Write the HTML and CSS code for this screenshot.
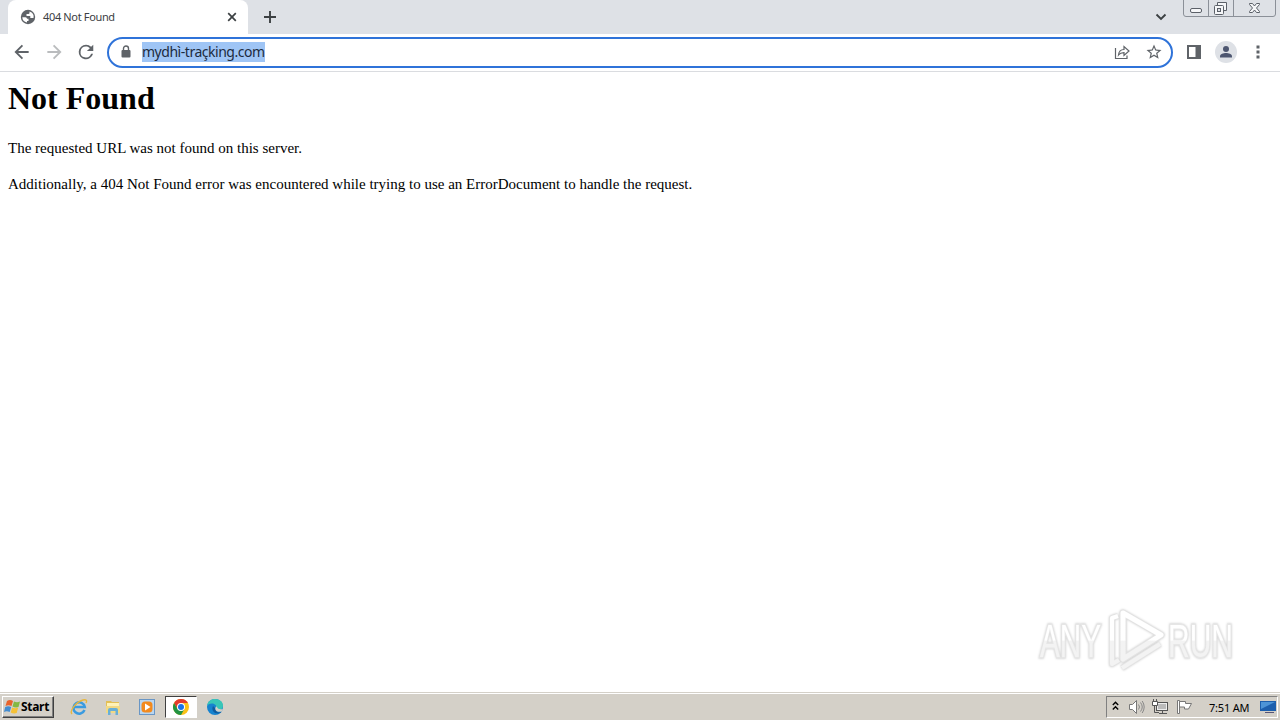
FILE: index.html
```html
<!DOCTYPE html>
<html lang="en">
<head>
  <meta charset="UTF-8">
  <title>404 Not Found</title>
  <link rel="stylesheet" href="styles.css">
</head>
<body>
  <div class="tabstrip">
    <div class="tab">
      <svg class="globe" width="16" height="16" viewBox="0 0 16 16">
        <circle cx="8" cy="8" r="7.200" fill="#5f6368"/>
        <path d="M2.300 8.300h3.200q1.500 0 1.500 1.500h1.500V12H7v1.500Q2.500 12.500 2.300 8.300zM9.500 2.500V4q0 1-1.200 1H6.500v2h3.800v2h3.200Q14.500 4 9.500 2.500z" fill="#fff"/>
      </svg>
      <span class="tab-title">404 Not Found</span>
      <svg class="tab-close" width="10" height="10" viewBox="0 0 10 10"><path d="M1.200 1.200l7.600 7.600M8.800 1.200L1.200 8.800" stroke="#3c4043" stroke-width="1.700"/></svg>
    </div>
    <svg class="new-tab" width="12" height="12" viewBox="0 0 12 12"><path d="M6 0v12M0 6h12" stroke="#3c4043" stroke-width="1.900"/></svg>
    <svg class="tab-search" width="12" height="8" viewBox="0 0 12 8"><path d="M1.500 1.500L6 6l4.500-4.500" fill="none" stroke="#3c4043" stroke-width="1.900"/></svg>
    <svg class="window-buttons" width="94" height="18" viewBox="0 0 94 18">
      <path d="M.5 0v14q0 2.500 2.500 2.500h87q2.500 0 2.500-2.500V0M25.500 0v16.500M50.500 0v16.500" fill="none" stroke="#8b9098"/>
      <rect x="7.500" y="8.500" width="11" height="4" rx="1.500" fill="#f5f6f8" stroke="#5b6068"/>
      <path d="M34.500 5.500v-3h9v8h-3" fill="#f5f6f8" stroke="#5b6068"/>
      <rect x="31.500" y="5.500" width="9" height="9" rx="1" fill="#f5f6f8" stroke="#5b6068"/>
      <rect x="34.500" y="8.500" width="3" height="3" fill="#dee1e6" stroke="#5b6068"/>
      <path d="M66.500 3.500h3l2 2.500 2-2.500h3v1L73.500 8l3 3.500v1h-3l-2-2.500-2 2.500h-3v-1l3-3.500-3-3.500z" fill="#f5f6f8" stroke="#5b6068"/>
    </svg>
  </div>

  <div class="toolbar">
    <svg class="nav" viewBox="0 0 24 24"><path d="M20 12H5M12.500 4l-8 8 8 8" fill="none" stroke="#5f6368" stroke-width="2.200"/></svg>
    <svg class="nav" viewBox="0 0 24 24"><path d="M4 12h15M11.500 4l8 8-8 8" fill="none" stroke="#babcbe" stroke-width="2.200"/></svg>
    <svg class="nav" viewBox="1 1 22 22"><path d="M17.650 6.350A7.950 7.950 0 0 0 12 4a8 8 0 1 0 7.730 10h-2.080A6 6 0 1 1 12 6c1.660 0 3.140.69 4.220 1.780L13 11h7V4z" fill="#5f6368"/></svg>
    <div class="omnibox">
      <svg class="lock" width="10" height="14" viewBox="0 0 10 14"><path d="M2.500 6V3.500a2.500 2.500 0 0 1 5 0V6" fill="none" stroke="#5f6368" stroke-width="1.400"/><rect x=".5" y="5" width="9" height="7.500" rx="1" fill="#5f6368"/></svg>
      <span class="url">mydhì-traçking.com</span>
      <svg class="share" width="16" height="16" viewBox="0 0 16 16"><path d="M1.500 4v10.500h11.500v-3M4.500 11c.3-3.500 2.500-5.500 5.500-5.500V2.500l5 4.500-5 4.500V8.700c-2.500 0-4 .3-5.500 2.300z" fill="none" stroke="#5f6368" stroke-width="1.200"/></svg>
      <svg class="star" width="18" height="18" viewBox="0 0 24 24"><path d="M22 9.240l-7.190-.62L12 2 9.190 8.630 2 9.240l5.460 4.730L5.820 21 12 17.270 18.180 21l-1.630-7.030zM12 15.400l-3.760 2.270 1-4.280-3.320-2.880 4.380-.38L12 6.100l1.710 4.040 4.380.38-3.320 2.880 1 4.280z" fill="#5f6368"/></svg>
    </div>
    <svg class="panel" width="14" height="14" viewBox="0 0 14 14"><path d="M0 0h14v14H0zM2 2v10h6.500V2z" fill="#5f6368" fill-rule="evenodd"/></svg>
    <svg class="avatar" width="22" height="22" viewBox="0 0 22 22"><circle cx="11" cy="11" r="11" fill="#dee1e6"/><circle cx="11" cy="8" r="3" fill="#4d5670"/><path d="M5 16.500v-1.300c0-2 3.500-3.200 6-3.200s6 1.200 6 3.200v1.300z" fill="#4d5670"/></svg>
    <svg class="menu" width="4" height="14" viewBox="0 0 4 14"><path d="M.5 .5h3v3h-3zM.5 5.500h3v3h-3zM.5 10.500h3v3h-3z" fill="#5f6368"/></svg>
  </div>

  <main class="page">
    <h1>Not Found</h1>
    <p class="line-url">The requested URL was not found on this server.</p>
    <p class="line-extra">Additionally, a 404 Not Found error was encountered while trying to use an ErrorDocument to handle the request.</p>
    <svg class="watermark" width="210" height="70" viewBox="0 0 210 70">
      <defs>
        <linearGradient id="fade" x1="0" y1="0" x2="0" y2="70" gradientUnits="userSpaceOnUse">
          <stop offset=".5" stop-color="#fff"/>
          <stop offset=".52" stop-color="#f3f3f3"/>
        </linearGradient>
      </defs>
      <text x="4" y="52" textLength="61" lengthAdjust="spacingAndGlyphs">ANY</text>
      <text x="132" y="52" textLength="65" lengthAdjust="spacingAndGlyphs">RUN</text>
      <g fill="none" stroke-linejoin="round">
        <path d="M82 11l-6 2v46l7-4M86 63l38-24" stroke="#e4e4e4" stroke-width="6"/>
        <path d="M87 8l38 22-38 24z" stroke="#e4e4e4" stroke-width="7"/>
        <path d="M82 11l-6 2v46l7-4M86 63l38-24" stroke="url(#fade)" stroke-width="4"/>
        <path d="M87 8l38 22-38 24z" stroke="url(#fade)" stroke-width="5"/>
      </g>
    </svg>
  </main>

  <footer class="taskbar">
    <div class="start">
      <svg width="17" height="16" viewBox="0 0 17 16">
        <path d="M3 2q3-2 6 0L7.500 7q-3-1.500-6 0z" fill="#e8622b"/>
        <path d="M10 2.500q3 1.500 6 0L14.500 8q-3 1-6-.5z" fill="#83b843"/>
        <path d="M1.200 8q3-1.500 6 0L5.700 13q-3-1.500-5.700 0z" fill="#438cd0"/>
        <path d="M8.200 8.500q3 1.500 6 0L12.700 14q-3 1-6-.5z" fill="#f5c136"/>
      </svg>
      <span>Start</span>
    </div>
    <div class="launch">
      <svg width="18" height="18" viewBox="0 0 18 18"><path d="M14.500 12A5.700 5.700 0 1 1 14.800 9H4.500" fill="none" stroke="#3a9be0" stroke-width="2.500"/><path d="M2 16C-1 13 6 4 13 2q5-1 3 3" fill="none" stroke="#e8b63c" stroke-width="1.400"/></svg>
    </div>
    <div class="launch">
      <svg width="18" height="18" viewBox="0 0 18 18"><path d="M2 3h5l1 1h7v11H2z" fill="#e3bf55"/><path d="M3 5h12v3H3z" fill="#fff2b7"/><path d="M2 8h14v7H2z" fill="#f2d984"/><path d="M4 17v-5q0-2 2-2h6q2 0 2 2v5h-2.500v-4h-5v4z" fill="#68afd7"/></svg>
    </div>
    <div class="launch">
      <svg width="18" height="18" viewBox="0 0 18 18"><rect x="1.500" y="1.500" width="15" height="15" fill="#b9d6f0" stroke="#6996c5"/><rect x="3.500" y="3.500" width="11" height="11" rx="3.500" fill="#f28a1e"/><path d="M7 5.500L12.500 9 7 12.500z" fill="#fff"/></svg>
    </div>
    <div class="launch active">
      <svg width="16" height="16" viewBox="0 0 16 16"><circle cx="8" cy="8" r="8" fill="#fbc116"/><path d="M1.070 4A8 8 0 0 1 14.930 4H8L4.540 10z" fill="#e33b2e"/><path d="M1.070 4A8 8 0 0 0 8 16l3.460-6H4.540z" fill="#229342"/><circle cx="8" cy="8" r="4" fill="#fff"/><circle cx="8" cy="8" r="3" fill="#1a73e8"/></svg>
    </div>
    <div class="launch">
      <svg width="16" height="16" viewBox="0 0 16 16"><circle cx="8" cy="8" r="8" fill="#1683cf"/><path d="M0 7C1 2 4 0 8 0c5 0 8 3 8 6.500 0 3-2 4.500-5 4.500-2 0-2-1-1.500-2C10 7 8 4.500 5 4.500 2.500 4.500.8 5.500 0 7z" fill="#38c6b7"/><path d="M6 7c-2 4 1 7.500 5 7.500 2 0 3-.8 3.500-1.500-3 1-6 0-5.500-3z" fill="#105b9e"/><path d="M9 7.500c2 0 0 3.500 7 2.500L14.500 12.500c-4 1-8-1-5.500-5z" fill="#d4d0c8"/></svg>
    </div>
    <div class="tray">
      <svg class="chevrons" width="7" height="10" viewBox="0 0 7 10"><path d="M.8 4l2.700-2.700L6.200 4M.8 8.500l2.700-2.700 2.700 2.700" fill="none" stroke="#000" stroke-width="1.400"/></svg>
      <svg class="speaker" width="17" height="16" viewBox="0 0 17 16"><path d="M1.500 5.500h3l4-4v13l-4-4h-3z" fill="#fff" stroke="#777"/><path d="M10.500 5.500q2 2.500 0 5M12.500 3.500q3.500 4.500 0 9M14.200 2q4 6 0 12" fill="none" stroke="#888"/></svg>
      <svg class="network" width="17" height="16" viewBox="0 0 17 16"><rect x="4.500" y="3.500" width="11" height="8" fill="#eee" stroke="#555"/><path d="M6 5h8v5H6z" fill="#bbb"/><path d="M7 14.500h8M10.500 12v2M2.500 7v6.500H7" fill="none" stroke="#555"/><path d="M.5 2.500h5v4h-5zM1.500 0v2M4.500 0v2" fill="#fff" stroke="#555"/></svg>
      <svg class="flag" width="16" height="16" viewBox="0 0 16 16"><path d="M1.500 1.500h2v13h-2z" fill="#fff" stroke="#777"/><path d="M3.500 2.500h6v2h6l-3 5.500h-4v-2h-5z" fill="#fff" stroke="#777"/></svg>
      <span class="clock">7:51 AM</span>
      <svg class="desktop" width="16" height="14" viewBox="0 0 16 14"><path d="M0 1h16v10H0z" fill="#1d5fad"/><path d="M1 2h14L1 9z" fill="#4d94d7"/><path d="M5 12h9v1H5z" fill="#557"/></svg>
    </div>
  </footer>
</body>
</html>
```

FILE: styles.css
```css
* {
  box-sizing: border-box;
}

body {
  margin: 0;
  height: 720px;
  display: flex;
  flex-direction: column;
  overflow: hidden;
  background: #fff;
  font-family: "Noto Sans", sans-serif;
}

svg {
  display: block;
  flex: none;
}

.tabstrip {
  height: 34px;
  display: flex;
  background: #dee1e6;
}

.tab {
  width: 240px;
  height: 34px;
  margin-left: 8px;
  padding: 0 11px 0 12px;
  display: flex;
  align-items: center;
  background: #fff;
  border-radius: 8px 8px 0 0;
}

.tab-title {
  flex: 1;
  margin: -2px 0 0 7px;
  font-size: 11px;
  letter-spacing: -0.35px;
  color: #3c4043;
}

.new-tab {
  margin: 11px 0 0 16px;
}

.tab-search {
  margin: 13px 16px 0 auto;
}

.window-buttons {
  margin-right: 3px;
}

.toolbar {
  height: 38px;
  display: flex;
  align-items: center;
  padding: 0 20px 1px 12px;
  border-bottom: 1px solid #dadce0;
}

.nav {
  width: 20px;
  height: 20px;
  margin-right: 12px;
}

.omnibox {
  width: 1066px;
  height: 31px;
  margin: 1px 0 0 -1px;
  padding: 0 8px 1px 12px;
  display: flex;
  flex: none;
  align-items: center;
  border: 2px solid #2f73d9;
  border-radius: 16px;
}

.url {
  margin: 0 auto 0 11px;
  background: #9fc5f5;
  color: #1c2b40;
  font-size: 14px;
  line-height: 20px;
  letter-spacing: -0.47px;
}

.share {
  margin-right: 15px;
}

.panel {
  margin-left: 14px;
}

.avatar {
  margin-left: 14px;
}

.menu {
  margin-left: 19px;
}

.page {
  flex: 1;
  position: relative;
  padding: 8px;
  font-family: "Liberation Serif", serif;
  font-size: 15px;
  color: #000;
}

h1 {
  margin: 0;
  font-size: 32px;
  line-height: 37px;
}

p {
  margin: 22px 0 0;
  line-height: 18px;
}

.line-extra {
  margin-top: 18px;
}

.watermark {
  position: absolute;
  right: 34px;
  bottom: 17px;
  filter: drop-shadow(0 0 1px #ccc);
}

.watermark text {
  font: 46px "Liberation Sans", sans-serif;
  fill: url(#fade);
  stroke: #e6e6e6;
  stroke-width: 3px;
  paint-order: stroke;
}

.taskbar {
  height: 28px;
  display: flex;
  align-items: center;
  padding: 3px 2px 2px;
  background: #d4d0c8;
  border-top: 1px solid #d4d0c8;
  box-shadow: inset 0 1px #fff;
}

.start {
  width: 52px;
  height: 22px;
  margin-right: 9px;
  padding-left: 1px;
  display: flex;
  align-items: center;
  border: 1px solid;
  border-color: #fff #404040 #404040 #fff;
  box-shadow: inset -1px -1px #808080;
}

.start span {
  font-size: 12px;
  font-weight: bold;
  line-height: 18px;
  letter-spacing: -0.3px;
}

.launch {
  width: 32px;
  height: 22px;
  margin-right: 2px;
  display: flex;
  align-items: center;
  justify-content: center;
}

.launch.active {
  background: #fff;
  border: 1px solid;
  border-color: #404040 #fff #fff #404040;
}

.tray {
  width: 172px;
  height: 22px;
  margin-left: auto;
  padding-left: 5px;
  display: flex;
  align-items: center;
  border: 1px solid;
  border-color: #808080 #fff #fff #808080;
}

.chevrons {
  margin-top: -2px;
}

.speaker {
  margin-left: 9px;
}

.network,
.flag {
  margin-left: 7px;
}

.clock {
  width: 51px;
  margin-left: 17px;
  font-size: 11px;
  letter-spacing: -0.2px;
  white-space: nowrap;
}
```
